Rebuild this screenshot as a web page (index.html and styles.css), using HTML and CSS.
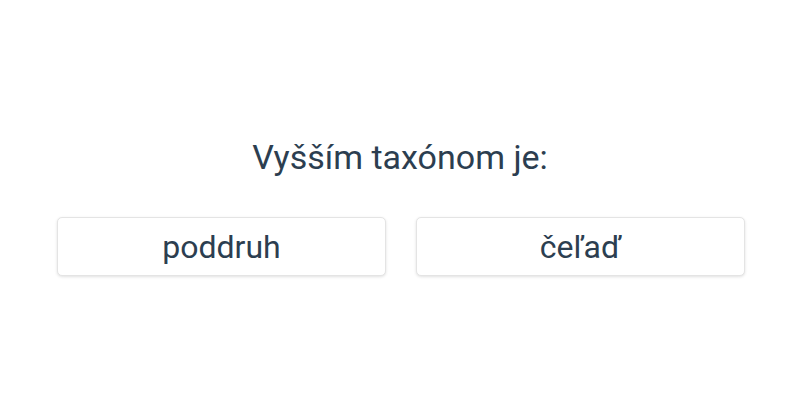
FILE: index.html
```html
<!DOCTYPE html>
<html lang="sk">
<head>
<meta charset="utf-8">
<link rel="stylesheet" href="styles.css">
</head>
<body>
<main class="quiz">
  <h1 class="question">Vyšším taxónom je:</h1>
  <div class="answers">
    <button class="answer">poddruh</button>
    <button class="answer">čeľaď</button>
  </div>
</main>
</body>
</html>
```
FILE: styles.css
```css
html, body {
  margin: 0;
  padding: 0;
  background: #ffffff;
}
body {
  width: 800px;
  height: 400px;
  font-family: Roboto, "Noto Sans", sans-serif;
  color: #2c3e50;
}
.quiz {
  display: flex;
  flex-direction: column;
  align-items: center;
  padding-top: 137px;
}
.question {
  margin: 0;
  font-size: 34px;
  font-weight: 400;
  line-height: 40px;
  text-align: center;
}
.answers {
  display: flex;
  gap: 30px;
  margin-top: 40px;
  padding-left: 2px;
}
.answer {
  width: 329px;
  height: 59px;
  background: #fff;
  border: 1px solid #e4e4e4;
  border-radius: 5px;
  box-shadow: 0 1px 3px rgba(0,0,0,0.12);
  font-family: Roboto, "Noto Sans", sans-serif;
  font-size: 32px;
  color: #2c3e50;
  padding: 0;
}
```
